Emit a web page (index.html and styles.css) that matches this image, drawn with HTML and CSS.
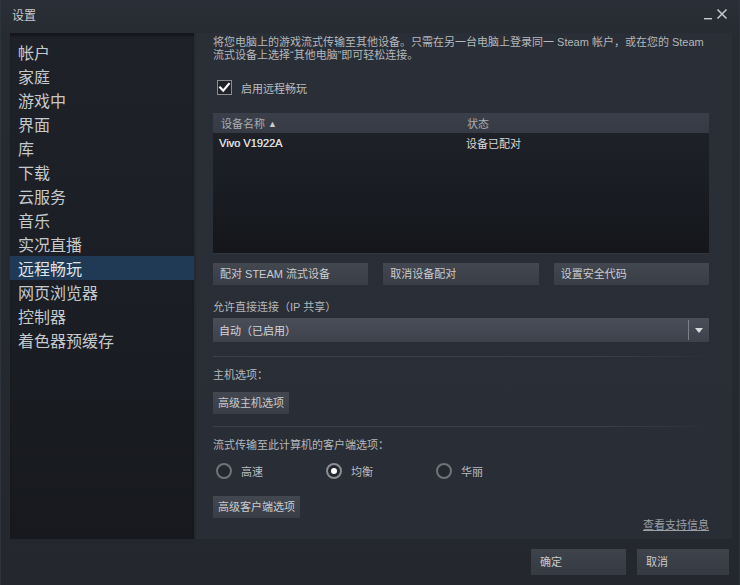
FILE: index.html
```html
<!DOCTYPE html>
<html lang="zh-CN">
<head>
<meta charset="utf-8">
<title>设置</title>
<link rel="stylesheet" href="styles.css">
</head>
<body>
<div class="window">
  <div class="titlebar">
    <span class="title">设置</span>
    <div class="controls">
      <svg class="ctl" width="10" height="12" viewBox="0 0 10 12"><rect x="1" y="10" width="8" height="1.4" fill="#c9cbce"/></svg>
      <svg class="ctl" width="12" height="12" viewBox="0 0 12 12"><path d="M1.5 1.5 L10.5 10.5 M10.5 1.5 L1.5 10.5" stroke="#c9cbce" stroke-width="1.5" fill="none"/></svg>
    </div>
  </div>
  <div class="main">
    <nav class="sidebar">
      <div class="nav-item">帐户</div>
      <div class="nav-item">家庭</div>
      <div class="nav-item">游戏中</div>
      <div class="nav-item">界面</div>
      <div class="nav-item">库</div>
      <div class="nav-item">下载</div>
      <div class="nav-item">云服务</div>
      <div class="nav-item">音乐</div>
      <div class="nav-item">实况直播</div>
      <div class="nav-item active">远程畅玩</div>
      <div class="nav-item">网页浏览器</div>
      <div class="nav-item">控制器</div>
      <div class="nav-item">着色器预缓存</div>
    </nav>
    <section class="panel">
      <p class="desc">将您电脑上的游戏流式传输至其他设备。只需在另一台电脑上登录同一 Steam 帐户，或在您的 Steam<br>流式设备上选择“其他电脑”即可轻松连接。</p>
      <label class="check-row">
        <span class="checkbox"><svg width="13" height="13" viewBox="0 0 13 13"><path d="M2.2 6.6 L5.2 9.6 L10.8 3" stroke="#ffffff" stroke-width="2.2" fill="none" stroke-linecap="square"/></svg></span>
        <span class="check-label">启用远程畅玩</span>
      </label>
      <div class="table">
        <div class="thead">
          <div class="col-name">设备名称 <span class="sort">▲</span></div>
          <div class="col-status">状态</div>
        </div>
        <div class="trow">
          <div class="col-name latin">Vivo V1922A</div>
          <div class="col-status">设备已配对</div>
        </div>
      </div>
      <div class="btn-row">
        <div class="btn">配对 STEAM 流式设备</div>
        <div class="btn">取消设备配对</div>
        <div class="btn">设置安全代码</div>
      </div>
      <div class="label label-ip">允许直接连接（IP 共享）</div>
      <div class="dropdown">
        <span class="dd-text">自动（已启用）</span>
        <span class="dd-arrow"><svg width="8" height="5" viewBox="0 0 8 5"><path d="M0 0 L8 0 L4 5 Z" fill="#d8dadc"/></svg></span>
      </div>
      <div class="sep"></div>
      <div class="label label-host">主机选项：</div>
      <div class="btn btn-small btn-host">高级主机选项</div>
      <div class="sep sep2"></div>
      <div class="label label-client">流式传输至此计算机的客户端选项：</div>
      <div class="radios">
        <div class="radio-item"><span class="radio"></span><span>高速</span></div>
        <div class="radio-item"><span class="radio checked"></span><span>均衡</span></div>
        <div class="radio-item"><span class="radio"></span><span>华丽</span></div>
      </div>
      <div class="btn btn-small btn-client">高级客户端选项</div>
      <div class="link-row"><a class="link">查看支持信息</a></div>
    </section>
  </div>
  <div class="footer">
    <div class="fbtn fbtn-ok">确定</div>
    <div class="fbtn fbtn-cancel">取消</div>
  </div>
</div>
</body>
</html>
```

FILE: styles.css
```css
html, body {
  margin: 0;
  padding: 0;
}
body {
  background: #24272e;
  font-family: "Liberation Sans", "Noto Sans CJK SC", sans-serif;
  color: #c3c6c9;
}
.window {
  width: 740px;
  height: 585px;
  box-sizing: border-box;
  display: flex;
  flex-direction: column;
  background: linear-gradient(#2a2e36 0, #262a31 40px, #24272e 100%);
  border-left: 1px solid #2f333b;
  border-right: 1px solid #2f333b;
}
.titlebar {
  height: 33px;
  display: flex;
  align-items: flex-start;
  justify-content: space-between;
  padding: 0 11px 0 11px;
  box-sizing: border-box;
}
.title {
  font-family: "Noto Sans CJK SC", sans-serif;
  font-size: 12px;
  line-height: 14px;
  margin-top: 8px;
  color: #c8cacd;
}
.controls {
  display: flex;
  gap: 3px;
  margin-top: 8px;
}
.ctl {
  display: block;
}
.main {
  display: flex;
  gap: 2px;
  padding: 0 7px 0 9px;
  height: 506px;
}
.sidebar {
  width: 184px;
  flex: none;
  box-sizing: border-box;
  padding-top: 7px;
  background: linear-gradient(#1e2128 0, #1b1e24 50%, #17191e 100%);
  box-shadow: inset 0 4px 3px -1px rgba(0,0,0,0.35);
}
.nav-item {
  height: 24px;
  line-height: 24px;
  padding-left: 8px;
  font-family: "Noto Sans CJK SC", sans-serif;
  font-size: 16px;
  color: #c6c9cc;
}
.nav-item.active {
  background: #203a55;
  color: #dfe3e6;
}
.panel {
  flex: 1;
  box-sizing: border-box;
  padding: 3px 23px 0 17px;
  background: linear-gradient(#2a2e36, #292d35);
  display: flex;
  flex-direction: column;
  font-size: 11px;
}
.desc {
  margin: 0;
  font-size: 11px;
  line-height: 13px;
  color: #b4b8bc;
  white-space: nowrap;
}
.check-row {
  display: flex;
  align-items: center;
  margin-top: 18px;
  padding-left: 4px;
  height: 15px;
}
.checkbox {
  width: 15px;
  height: 15px;
  box-sizing: border-box;
  border: 1px solid #8a8e94;
  background: #202329;
  display: flex;
  align-items: center;
  justify-content: center;
}
.checkbox svg { display: block; }
.check-label {
  margin-left: 9px;
  color: #b9bdc1;
  font-size: 11px;
}
.table {
  margin-top: 18px;
  height: 140px;
  background: linear-gradient(#1f2229, #1a1d23 50%, #14161b 100%);
  box-shadow: 0 1px 0 #32363e;
}
.thead {
  height: 20px;
  display: flex;
  align-items: center;
  background: linear-gradient(#3b3f49, #363a44);
  color: #a9adb2;
}
.trow {
  height: 20px;
  display: flex;
  align-items: center;
  color: #d7d9dc;
}
.col-name {
  width: 248px;
  padding-left: 6px;
  box-sizing: border-box;
}
.thead .col-name { padding-left: 8px; }
.col-status {
  padding-left: 5px;
}
.thead .col-status { padding-left: 6px; }
.sort {
  font-size: 9px;
  vertical-align: 1px;
  color: #c9ccd0;
}
.latin {
  font-family: "Liberation Sans", sans-serif;
  color: #d9dbde;
  text-shadow: 0.3px 0 0 #d9dbde;
}
.btn-row {
  margin-top: 10px;
  display: grid;
  grid-template-columns: 1fr 1fr 1fr;
  gap: 15px;
}
.btn {
  height: 22px;
  line-height: 22px;
  padding-left: 7px;
  background: linear-gradient(#434750, #393d46);
  color: #c9cbce;
  font-size: 11px;
  box-sizing: border-box;
  white-space: nowrap;
}
.btn-small {
  align-self: flex-start;
  padding: 0 5px;
}
.label {
  line-height: 16px;
  color: #b4b8bc;
}
.label-ip { margin-top: 14px; }
.dropdown {
  margin-top: 3px;
  height: 24px;
  display: flex;
  align-items: center;
  background: linear-gradient(#4a4e58, #3e424b);
  color: #d3d5d8;
}
.dd-text {
  flex: 1;
  padding-left: 6px;
}
.dd-arrow {
  width: 20px;
  height: 20px;
  border-left: 1px solid #7c8088;
  display: flex;
  align-items: center;
  justify-content: center;
}
.dd-arrow svg { display: block; }
.sep {
  margin-top: 14px;
  height: 1px;
  background: linear-gradient(90deg, #3c4048 0, #3d4149 75%, rgba(61,65,73,0.3) 95%, rgba(61,65,73,0) 100%);
}
.label-host { margin-top: 10px; }
.btn-host { margin-top: 9px; }
.sep2 { margin-top: 12px; }
.label-client { margin-top: 10px; }
.radios {
  margin-top: 10px;
  display: flex;
  height: 16px;
  padding-left: 3px;
}
.radio-item {
  width: 110px;
  display: flex;
  align-items: center;
  color: #b9bdc1;
}
.radio {
  width: 16px;
  height: 16px;
  box-sizing: border-box;
  border-radius: 50%;
  border: 2px solid #6f737a;
  background: #25282f;
  margin-right: 9px;
  display: flex;
  align-items: center;
  justify-content: center;
}
.radio.checked {
  border-color: #8a8e95;
}
.radio.checked::after {
  content: "";
  width: 6px;
  height: 6px;
  border-radius: 50%;
  background: #ffffff;
}
.btn-client { margin-top: 17px; }
.link-row {
  text-align: right;
  line-height: 14px;
}
.link {
  color: #9a9fa5;
  text-decoration: underline;
  font-size: 11px;
}
.footer {
  flex: 1;
  display: flex;
  justify-content: flex-end;
  align-items: flex-start;
  gap: 11px;
  padding: 10px 10px 0 0;
}
.fbtn {
  height: 26px;
  line-height: 26px;
  padding-left: 9px;
  box-sizing: border-box;
  background: linear-gradient(#3e424b, #363a42);
  color: #c8cacd;
  font-size: 11px;
}
.fbtn-ok { width: 95px; }
.fbtn-cancel { width: 92px; }
```
